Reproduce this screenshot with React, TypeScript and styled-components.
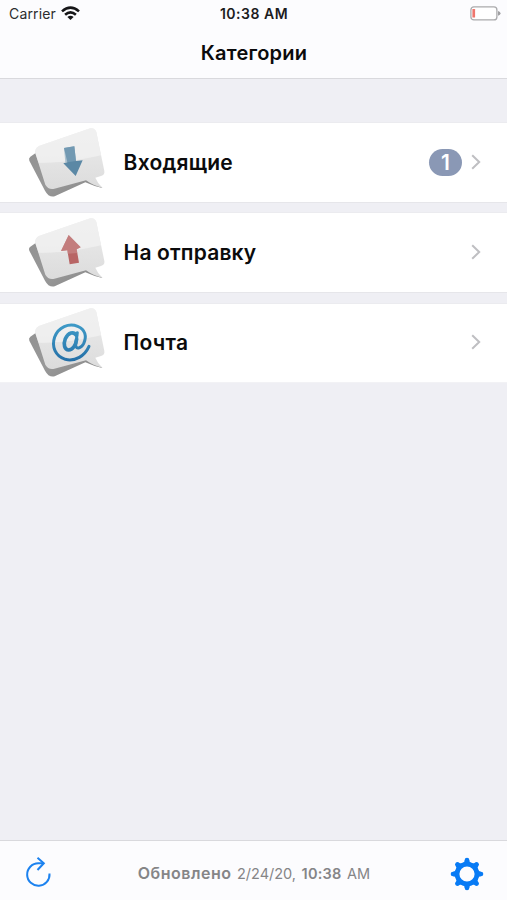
import React from "react";
import styled, { createGlobalStyle } from "styled-components";

const GlobalStyle = createGlobalStyle`
  * { box-sizing: border-box; }
  html, body { margin: 0; padding: 0; }
  body { font-family: Inter, "Liberation Sans", sans-serif; background: #efeff4; color: #0b0b0c; }
  svg { display: block; flex: none; }
`;

const Screen = styled.div`
  width: 100%;
  height: 100vh;
  min-height: 900px;
  display: flex;
  flex-direction: column;
  background: #efeff4;
`;

const Header = styled.header`
  height: 79px;
  flex: none;
  background: #fcfcfe;
  border-bottom: 1px solid #d9d9dd;
`;

const StatusBar = styled.div`
  height: 27px;
  display: grid;
  grid-template-columns: 1fr auto 1fr;
  align-items: center;
  padding: 0 6px 0 9px;
  white-space: nowrap;
`;

const Carrier = styled.div`
  display: flex;
  align-items: center;
  gap: 5.5px;
  font-size: 14px;
  letter-spacing: 0.15px;
  color: #2c2c2e;
`;

const Clock = styled.div`
  font-size: 14px;
  font-weight: 600;
  letter-spacing: 0.5px;
  margin-right: 2px;
  color: #1c1c1e;
`;

const BatterySlot = styled.div`
  display: flex;
  justify-content: flex-end;
`;

const Title = styled.h1`
  margin: 0;
  height: 52px;
  line-height: 52px;
  padding-left: 1px;
  text-align: center;
  font-size: 20px;
  font-weight: 600;
  letter-spacing: 0.22px;
`;

const List = styled.main`
  flex: 1;
  padding-top: 43px;
`;

const Row = styled.div`
  height: 81px;
  margin-bottom: 9.4px;
  display: flex;
  align-items: center;
  padding: 0 26px 0 28px;
  background: #fff;
  border-top: 1px solid #ebebef;
  border-bottom: 1px solid #e6e6ea;

  &:last-child {
    height: 80px;
    border-bottom-color: #f2f2f5;
  }
`;

const BubbleSvg = styled.svg`
  margin-bottom: 3px;
`;

const Label = styled.span<{ $tracking: number }>`
  flex: 1;
  margin-left: 17.6px;
  padding-top: 1px;
  font-size: 21px;
  font-weight: 600;
  line-height: 28px;
  letter-spacing: ${(p) => p.$tracking}px;
  white-space: nowrap;
`;

const Badge = styled.span`
  width: 33px;
  height: 27px;
  margin: 0 9px 1px 0;
  border-radius: 14px;
  background: #8a98b5;
  color: #fff;
  display: flex;
  align-items: center;
  justify-content: center;
  font-size: 21px;
  font-weight: 600;
`;

const ChevronSvg = styled.svg`
  margin-bottom: 1px;
`;

const Toolbar = styled.footer`
  height: 60px;
  flex: none;
  display: flex;
  align-items: center;
  justify-content: space-between;
  padding: 6px 23px 0 25px;
  background: #fcfcfe;
  border-top: 1px solid #d9d9dd;
`;

const Updated = styled.div`
  margin-left: 6px;
  color: #858587;
  font-size: 14.5px;
  line-height: 20px;
  white-space: nowrap;
  display: flex;
  align-items: baseline;
  gap: 5.5px;
`;

const UpdatedLabel = styled.span`
  font-size: 16px;
  font-weight: 600;
  letter-spacing: 0.5px;
`;

const Time = styled.span`
  font-weight: 600;
  letter-spacing: 0.25px;
`;

const ToolButton = styled.button<{ $lift?: number }>`
  border: 0;
  padding: 0 0 ${(p) => p.$lift ?? 0}px;
  background: none;
`;

type Kind = "down" | "up" | "mail";

const Emblem = ({ kind }: { kind: Kind }) => {
  if (kind === "down")
    return (
      <g>
        <path d="M147 87L178 82L183 126L203 124L182 171L145 133L157 130Z" fill="#5b88a5" />
        <path d="M147 87L178 82L183 126L157 130L151 130Z" fill="#82a5ba" opacity=".6" />
      </g>
    );
  if (kind === "up")
    return (
      <g>
        <path d="M161 78L197 115L185 121L192 161L164 166L157 124L138 126Z" fill="#b86565" />
        <path d="M161 78L197 115L185 121L187 132L158 134L157 124L138 126Z" fill="#cc9292" opacity=".55" />
      </g>
    );
  return (
    <g fill="none" stroke="url(#blue)" strokeLinecap="round">
      <path
        d="M222 142C209 171 181 188 151 181C121 172 109 143 119 114C130 85 161 71 188 82C211 91 216 112 206 134C198 149 182 152 182 138L187 101"
        strokeWidth="9"
      />
      <path d="M184 109C176 96 160 100 151 119C144 137 149 153 161 153C173 153 183 138 185 120" strokeWidth="11" />
    </g>
  );
};

const BubbleIcon = ({ kind }: { kind: Kind }) => (
  <BubbleSvg width="78" height="75" viewBox="39 15 234 225">
    <defs>
      <linearGradient id="side" x1="0" y1="0" x2="1" y2="1">
        <stop offset="0" stopColor="#929292" />
        <stop offset=".5" stopColor="#999" />
        <stop offset="1" stopColor="#858585" />
      </linearGradient>
      <linearGradient id="face" x1="0" y1="0" x2="0" y2="1">
        <stop offset="0" stopColor="#ececec" />
        <stop offset="1" stopColor="#dcdcdc" />
      </linearGradient>
      <linearGradient id="blue" x1="0" y1="72" x2="0" y2="186" gradientUnits="userSpaceOnUse">
        <stop offset="0" stopColor="#3e9bc8" />
        <stop offset=".5" stopColor="#3488b9" />
        <stop offset="1" stopColor="#246fa7" />
      </linearGradient>
    </defs>
    <path d="M62 102L46 113Q40 117 43 125L90 215Q101 236 119 232L211 190Q237 202 262 207L241 187L215 180L112 205Z" fill="url(#side)" />
    <path
      d="M72 81L226 28Q239 25 244 39L268 156Q270 168 258 171L241 176Q249 195 262 206Q238 202 213 184L118 209Q100 213 91 197L62 106Q57 89 72 81Z"
      fill="url(#face)"
    />
    <path d="M72 81L226 28Q239 25 244 39L258 109C213 119 139 134 71 131L62 106Q57 89 72 81Z" fill="#f1f1f1" opacity=".75" />
    <Emblem kind={kind} />
  </BubbleSvg>
);

const Chevron = () => (
  <ChevronSvg width="10" height="16" viewBox="0 0 10 16">
    <path d="M1.2 1.2L8.2 8L1.2 14.8" fill="none" stroke="#bfbfc2" strokeWidth="2" />
  </ChevronSvg>
);

const Wifi = () => (
  <svg width="19" height="15" viewBox="0 0 19 15" fill="none" stroke="#161618" strokeWidth="2.6">
    <path d="M1 5.4Q9.5 -2.2 18 5.4" />
    <path d="M4.1 8.8Q9.5 4 14.9 8.8" />
    <path d="M9.5 14L6.4 11Q9.5 8.4 12.6 11Z" fill="#161618" stroke="none" />
  </svg>
);

const Battery = () => (
  <svg width="31" height="15" viewBox="0 0 31 15">
    <rect x=".9" y=".9" width="26" height="13" rx="3" fill="#fff" stroke="#aaaaac" strokeWidth="1.3" />
    <rect x="2.4" y="3" width="2.7" height="8.5" rx=".5" fill="#ef766d" />
    <path d="M28 5Q30.6 6 30.6 7.4T28 9.8Z" fill="#a0a0a2" />
  </svg>
);

const Refresh = () => (
  <svg width="27" height="30" viewBox="0 0 27 30" fill="none" stroke="#1c82ef" strokeWidth="2">
    <path d="M24.5 16.5A11.2 11.2 0 1 1 13.3 6.3H18.6" />
    <path d="M12.5 0.8L18.8 6.3L12.5 13" />
  </svg>
);

const Gear = () => (
  <svg width="34" height="34" viewBox="-17 -17 34 34" stroke="#087bf5">
    <circle r="9.9" fill="none" strokeWidth="4.6" />
    {[0, 45, 90, 135, 180, 225, 270, 315].map((a) => (
      <g key={a} transform={`rotate(${a})`} fill="#087bf5" stroke="none">
        <path d="M-4.4 -10.7Q-2.3 -11.8 -2.3 -14H2.3Q2.3 -11.8 4.4 -10.7Z" />
        <circle cy={a % 90 ? -13.6 : -14} r="2.3" />
      </g>
    ))}
  </svg>
);

const categories: { kind: Kind; name: string; tracking: number; count?: number }[] = [
  { kind: "down", name: "Входящие", tracking: 0.25, count: 1 },
  { kind: "up", name: "На отправку", tracking: 0.17 },
  { kind: "mail", name: "Почта", tracking: 0.25 },
];

export default function App() {
  return (
    <Screen>
      <GlobalStyle />
      <Header>
        <StatusBar>
          <Carrier>
            <span>Carrier</span>
            <Wifi />
          </Carrier>
          <Clock>10:38 AM</Clock>
          <BatterySlot>
            <Battery />
          </BatterySlot>
        </StatusBar>
        <Title>Категории</Title>
      </Header>
      <List>
        {categories.map((c) => (
          <Row key={c.kind}>
            <BubbleIcon kind={c.kind} />
            <Label $tracking={c.tracking}>{c.name}</Label>
            {c.count && <Badge>{c.count}</Badge>}
            <Chevron />
          </Row>
        ))}
      </List>
      <Toolbar>
        <ToolButton aria-label="Обновить" $lift={4}>
          <Refresh />
        </ToolButton>
        <Updated>
          <UpdatedLabel>Обновлено</UpdatedLabel>
          <span>2/24/20,</span>
          <Time>10:38</Time>
          <span>AM</span>
        </Updated>
        <ToolButton aria-label="Настройки">
          <Gear />
        </ToolButton>
      </Toolbar>
    </Screen>
  );
}
